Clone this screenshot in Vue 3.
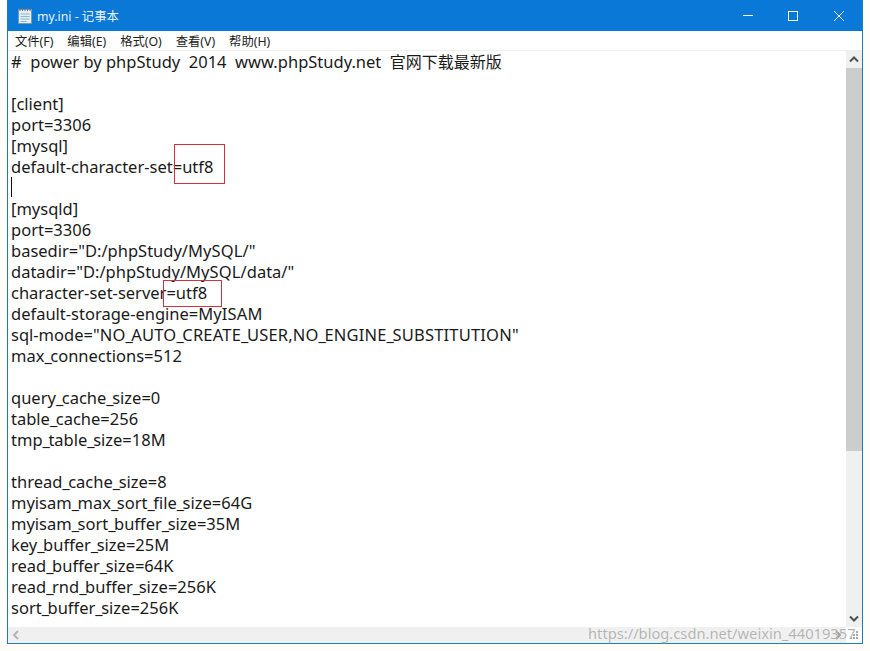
<script setup>
const lines = [
  '#  power by phpStudy  2014  www.phpStudy.net  官网下载最新版', '', '[client]', 'port=3306', '[mysql]',
  'default-character-set=utf8', '', '[mysqld]', 'port=3306', 'basedir="D:/phpStudy/MySQL/"',
  'datadir="D:/phpStudy/MySQL/data/"', 'character-set-server=utf8', 'default-storage-engine=MyISAM',
  'sql-mode="NO_AUTO_CREATE_USER,NO_ENGINE_SUBSTITUTION"', 'max_connections=512', '', 'query_cache_size=0',
  'table_cache=256', 'tmp_table_size=18M', '', 'thread_cache_size=8', 'myisam_max_sort_file_size=64G',
  'myisam_sort_buffer_size=35M', 'key_buffer_size=25M', 'read_buffer_size=64K', 'read_rnd_buffer_size=256K',
  'sort_buffer_size=256K'
]
const menus = ['文件(F)', '编辑(E)', '格式(O)', '查看(V)', '帮助(H)']
const parts = (line) => line.split(/(_|[\u4e00-\u9fff]+|[A-Z]{2,})/).filter(Boolean).map((text) => ({
  text,
  kind: text === '_' ? 'us' : /[\u4e00-\u9fff]/.test(text) ? 'cjk' : /^[A-Z]{2,}$/.test(text) ? 'caps' : ''
}))
const grip = [[10, 2], [7, 5], [10, 5], [4, 8], [7, 8], [10, 8]]
</script>

<template>
  <div class="page">
    <div class="window">
      <header class="titlebar">
        <svg class="app-icon" width="16" height="18" viewBox="0 0 16 18">
          <rect x="1.5" y="2.5" width="13" height="14" fill="#dfeef7" stroke="#7a97ab" />
          <path d="M3 1v3M5.5 1v3M8 1v3M10.5 1v3M13 1v3" stroke="#5f7688" />
          <path d="M3.5 7h9M3.5 9.5h9M3.5 12h9M3.5 14.5h6" stroke="#8fb4cc" />
        </svg>
        <span class="title">my.ini - 记事本</span>
        <div class="controls">
          <svg width="46" height="30" viewBox="0 0 46 30"><path d="M19 14.5h10" stroke="#fff" /></svg>
          <svg width="46" height="30" viewBox="0 0 46 30"><rect x="18.5" y="10.5" width="9" height="9" fill="none" stroke="#fff" /></svg>
          <svg width="46" height="30" viewBox="0 0 46 30"><path d="M18 10l10 10M28 10l-10 10" stroke="#fff" fill="none" /></svg>
        </div>
      </header>
      <nav class="menubar">
        <span v-for="m in menus" :key="m" class="menu">{{ m }}</span>
      </nav>
      <div class="body">
        <main class="editor">
          <div v-for="(l, i) in lines" :key="i" class="line"><span v-for="(p, j) in parts(l)" :key="j" :class="p.kind">{{ p.text }}</span></div>
          <i class="caret"></i>
          <b class="mark mark-a"></b>
          <b class="mark mark-b"></b>
        </main>
        <aside class="vscroll">
          <svg width="16" height="17" viewBox="0 0 16 17"><path d="M4 10.5l4-4 4 4" fill="none" stroke="#505050" stroke-width="2" /></svg>
          <div class="track"><div class="thumb"></div></div>
          <svg width="16" height="17" viewBox="0 0 16 17"><path d="M4 6.5l4 4 4-4" fill="none" stroke="#505050" stroke-width="2" /></svg>
        </aside>
      </div>
      <footer class="hscroll">
        <svg width="17" height="16" viewBox="0 0 17 16"><path d="M10 4l-4 4 4 4" fill="none" stroke="#b5b5b5" stroke-width="2" /></svg>
        <svg class="right" width="17" height="16" viewBox="0 0 17 16"><path d="M7 4l4 4-4 4" fill="none" stroke="#9a9a9a" stroke-width="2" /></svg>
        <svg class="corner" width="16" height="16" viewBox="0 0 16 16">
          <rect v-for="(g, i) in grip" :key="i" :x="g[0]" :y="g[1] + 2" width="2" height="2" fill="#a8a8a8" />
        </svg>
      </footer>
    </div>
    <span class="watermark">https://blog.csdn.net/weixin_44019357</span>
  </div>
</template>

<style>
body { background: #fff; }
</style>

<style scoped>
.page {
  position: relative;
  width: 870px;
  height: 651px;
  padding: 0 7px 7px 7px;
  box-sizing: border-box;
  background: #fffdfa;
  overflow: hidden;
  font-family: "Noto Sans", "Noto Sans CJK SC", sans-serif;
}
.window {
  height: 644px;
  display: flex;
  flex-direction: column;
  box-sizing: border-box;
  border: 1px solid #1b7fb4;
  border-top: 0;
  background: #fff;
}
.titlebar {
  height: 31px;
  flex: none;
  display: flex;
  align-items: center;
  background: #0a78d7;
  color: #e6f2fb;
  padding-left: 9px;
}
.app-icon { flex: none; }
.title {
  margin-left: 4px;
  font-size: 12.3px;
}
.controls {
  margin-left: auto;
  display: flex;
}
.menubar {
  height: 19px;
  flex: none;
  display: flex;
  align-items: center;
  gap: 14px;
  padding-left: 7px;
  font-size: 12.3px;
  color: #222;
  border-bottom: 1px solid #efefef;
}
.body {
  flex: 1;
  min-height: 0;
  display: flex;
}
.editor {
  position: relative;
  flex: 1;
  padding: 0 0 0 3px;
  font-size: 16.5px;
  line-height: 21px;
  color: #1a1a1a;
  overflow: hidden;
}
.line {
  height: 21px;
  white-space: pre;
}
.us { letter-spacing: -1.5px; }
.caps { letter-spacing: 0.2px; }
.cjk { font-size: 16px; }
.caret {
  position: absolute;
  left: 3px;
  top: 126px;
  width: 1px;
  height: 20px;
  background: #111;
}
.mark {
  position: absolute;
  box-sizing: border-box;
  border: 1px solid #d0333f;
}
.mark-a { left: 166px; top: 93px; width: 51px; height: 40px; }
.mark-b { left: 155px; top: 229px; width: 59px; height: 27px; }
.vscroll {
  width: 16px;
  flex: none;
  display: flex;
  flex-direction: column;
  background: #f0f0f0;
}
.vscroll svg { flex: none; }
.track { flex: 1; }
.thumb {
  height: 383px;
  background: #cdcdcd;
}
.hscroll {
  height: 16px;
  flex: none;
  display: flex;
  background: #f0f0f0;
}
.right { margin-left: auto; }
.corner { background: #fff; }
.watermark {
  position: absolute;
  left: 588px;
  top: 623px;
  font-size: 14.7px;
  line-height: 20px;
  color: rgba(130, 130, 130, 0.6);
  text-shadow: 0 0 1px #fff;
  white-space: nowrap;
}
</style>
